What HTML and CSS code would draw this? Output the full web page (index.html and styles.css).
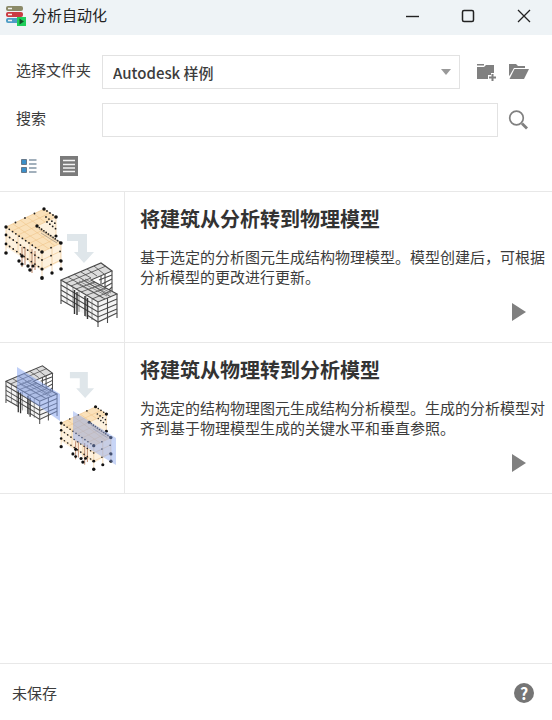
FILE: index.html
```
<!DOCTYPE html>
<html lang="zh-CN">
<head>
  <meta charset="UTF-8">
  <meta name="viewport" content="width=device-width, initial-scale=1.0">
  <title>分析自动化</title>
  <link rel="stylesheet" href="styles.css">
</head>
<body>

<!-- Shared drawings for the thumbnails -->
<svg class="defs" width="0" height="0" aria-hidden="true">
  <defs>
    <!-- Steel frame of the physical building -->
    <symbol id="physical" viewBox="0 0 60 68" overflow="visible">
      <path d="M2 20L42 3L53 11L32 20L58 34L39 42Z" fill="#dcdcdc"/>
      <path d="M2 20L39 42L58 34V53L39 62L2 40Z" fill="#f4f4f4"/>
      <g fill="none" stroke="#4a4a4a" stroke-width="1.100">
        <path d="M2 20L42 3L53 11L32 20L58 34L39 42Z"/>
        <path d="M9 17L46 39M15 14L52 37M22 12L32 18M28 9L38 16M35 6L45 14" stroke-width=".8"/>
        <path d="M7 23L47 6M12 26L32 18M17 29L36 22M22 32L41 25M28 35L47 28M33 39L52 31" stroke-width=".8"/>
        <path d="M17 23L44 38M20 21L48 36M23 20L50 34M26 19L52 33" stroke-width=".6"/>
        <path d="M2 25L39 47L58 39M40 20L53 15"/>
        <path d="M2 30L39 52L58 44M43 24L53 19M2 35L39 57L58 49M46 27L53 23M50 30L53 27M2 40L16 48M28 55L39 62L58 53"/>
        <path d="M2 20V44M39 42V67M58 34V58M48.500 38V63M53 11V31M46 14V27M42 16V25"/>
        <path d="M8 24V43M14 27V47M20 31V52M27 35V57M33 39V60" stroke-width=".6"/>
      </g>
      <path d="M15.500 30V54M18 32V55M26 36V56M28.500 38V59" fill="none" stroke="#333" stroke-width="1.400"/>
    </symbol>

    <!-- Node model of the analytical building -->
    <symbol id="analytical" viewBox="0 0 60 74" overflow="visible">
      <path d="M2 20L40 2L52 10V32L57 36V54L38 64L2 40Z" fill="#fdf1de"/>
      <path d="M2 20L40 2L52 10L33 19L57 36L38 45Z" fill="#fae1ba"/>
      <g fill="none" stroke="#efc48a" stroke-width=".6">
        <path d="M2 20L40 2L52 10L33 19L57 36L38 45ZM9 17L45 42M16 13L51 39M23 10L34 18M30 7L41 15"/>
        <path d="M8 24L46 6M14 28L33 19M20 32L39 23M26 36L45 27M32 41L51 32"/>
        <path d="M2 28L38 53L57 44M2 37L38 62L57 53M2 20V46M38 45V71M57 36V62M14 28V46M26 36V59M48 40V66M52 10V29"/>
      </g>
      <path d="M18 40V60M21 40V58M28 42V66M31 44V63" fill="none" stroke="#c08d70" stroke-width="1.100"/>
      <g fill="none" stroke="#1d1d1d" stroke-width="1.800" stroke-linecap="round">
        <path d="M2 20L38 45" stroke-dasharray="0 4"/>
        <path d="M33 19L57 36" stroke-dasharray="0 2.800"/>
        <path d="M2 28L38 53M2 37L38 62" stroke-dasharray="0 4.400"/>
        <path d="M40 2L52 10M42 10L52 17M43 15L52 22" stroke-dasharray="0 3.600"/>
        <path d="M38 45L57 36M38 53L57 44M38 62L57 53" stroke-dasharray="0 10"/>
        <path d="M2 20L40 2" stroke-dasharray="0 10.500"/>
      </g>
      <path d="M35 22L55 35M37 26L53 36" stroke="#8d8378" stroke-width=".6"/>
      <g fill="#111">
        <circle cx="2" cy="20" r="1.700"/><circle cx="40" cy="2" r="1.700"/><circle cx="52" cy="10" r="1.800"/>
        <circle cx="33" cy="19" r="1.700"/><circle cx="57" cy="36" r="1.700"/><circle cx="38" cy="45" r="1.800"/>
        <circle cx="2" cy="28" r="1.400"/><circle cx="2" cy="37" r="1.400"/><circle cx="2" cy="46" r="1.800"/>
        <circle cx="38" cy="62" r="1.600"/><circle cx="38" cy="71" r="1.900"/><circle cx="48" cy="66" r="1.700"/>
        <circle cx="57" cy="54" r="1.700"/><circle cx="57" cy="62" r="1.800"/><circle cx="52" cy="29" r="1.600"/>
        <circle cx="18" cy="49" r="1.700"/><circle cx="15" cy="54" r="1.700"/><circle cx="18" cy="57" r="1.600"/>
        <circle cx="24" cy="59" r="1.700"/><circle cx="26" cy="63" r="1.800"/><circle cx="29" cy="59" r="1.600"/>
      </g>
    </symbol>

    <symbol id="turn" viewBox="0 0 27 29">
      <path d="M0 0H20V18H27L17 29L7 18H11V7H0Z" fill="#dfe6ea"/>
    </symbol>
  </defs>
</svg>

<!-- Title bar -->
<header class="titlebar">
  <svg class="app-icon" width="20" height="20" viewBox="0 0 20 20" aria-hidden="true">
    <rect x="0" y="0" width="17" height="5" rx="2" fill="#8b8a68"/>
    <rect x="0" y="6" width="17" height="5" rx="2" fill="#cb3b43"/>
    <rect x="0" y="12" width="15" height="5" rx="2" fill="#4e9dc6"/>
    <path d="M2 2.500H6M2 8.500H6M2 14.500H6" stroke="#f1f1ee" stroke-width="1.600"/>
    <rect x="11" y="11" width="9" height="9" fill="#1fce5b"/>
    <path d="M13.500 12.500V18.500L18 15.500Z" fill="#14502b"/>
  </svg>
  <h1>分析自动化</h1>
  <div class="window-buttons">
    <button type="button" aria-label="最小化">
      <svg width="14" height="14" viewBox="0 0 14 14"><path d="M1 7.500H14" stroke="#222" stroke-width="1.400"/></svg>
    </button>
    <button type="button" aria-label="最大化">
      <svg width="14" height="14" viewBox="0 0 14 14"><rect x="1.500" y="1.500" width="11" height="11" rx="1.500" fill="none" stroke="#222" stroke-width="1.500"/></svg>
    </button>
    <button type="button" aria-label="关闭">
      <svg width="14" height="14" viewBox="0 0 14 14"><path d="M1 1L13 13M13 1L1 13" stroke="#222" stroke-width="1.300"/></svg>
    </button>
  </div>
</header>

<!-- Folder and search -->
<form class="filters">
  <div class="row folder-row">
    <label for="folder">选择文件夹</label>
    <div class="select-wrap">
      <select id="folder">
        <option>Autodesk 样例</option>
      </select>
      <svg class="caret" width="10" height="6" viewBox="0 0 10 6" aria-hidden="true"><path d="M0 0H10L5 6Z" fill="#999"/></svg>
    </div>
    <div class="row-buttons">
      <button type="button" aria-label="添加文件夹">
        <svg width="22" height="20" viewBox="0 0 22 20">
          <path d="M2 2H9V3.500H2ZM2 5H9L11 3H19V11H16V13H13V17H2Z" fill="#808080"/>
          <path d="M17.500 12V19M14 15.500H21" stroke="#808080" stroke-width="2"/>
        </svg>
      </button>
      <button type="button" aria-label="打开文件夹">
        <svg width="22" height="20" viewBox="0 0 22 20">
          <path d="M2 2H9L11 4H18V6H7L3 13L2 14Z" fill="#808080"/>
          <path d="M7.500 7H22L17 17H2.500Z" fill="#808080"/>
        </svg>
      </button>
    </div>
  </div>
  <div class="row search-row">
    <label for="search">搜索</label>
    <input type="text" id="search">
    <div class="row-buttons">
      <button type="button" aria-label="搜索">
        <svg width="22" height="22" viewBox="0 0 22 22">
          <circle cx="9.500" cy="9" r="6.800" fill="none" stroke="#808080" stroke-width="1.700"/>
          <path d="M15 14.500L20 19.500" stroke="#808080" stroke-width="2.800"/>
        </svg>
      </button>
    </div>
  </div>
  <div class="views">
    <button type="button" aria-label="缩略图视图">
      <svg width="16" height="16" viewBox="0 0 16 16">
        <path d="M.5 1.500H5.500V6.500H.5ZM.5 9.500H5.500V14.500H.5Z" fill="#3a8fc9" stroke="#66788a" stroke-width="1"/>
        <path d="M8 2H15.500M8 6H15.500M8 10H15.500M8 14H15.500" stroke="#8496a6" stroke-width="1.600"/>
      </svg>
    </button>
    <button type="button" aria-label="列表视图">
      <svg width="20" height="20" viewBox="0 0 20 20">
        <rect x="1" y="0" width="18" height="20" fill="#7b7b7b"/>
        <path d="M4 4.500H16M4 8.500H16M4 12H16M4 15.500H16" stroke="#f4f4f4" stroke-width="1.500"/>
      </svg>
    </button>
  </div>
</form>

<!-- Scripts -->
<main class="scripts">
  <article class="script">
    <svg class="thumb" width="124" height="150" viewBox="0 0 124 150" aria-hidden="true">
      <use href="#analytical" x="4" y="15" width="60" height="74"/>
      <use href="#turn" x="67" y="42" width="27" height="29"/>
      <use href="#physical" x="59" y="68" width="60" height="68"/>
    </svg>
    <div class="info">
      <h2>将建筑从分析转到物理模型</h2>
      <p>基于选定的分析图元生成结构物理模型。模型创建后，可根据分析模型的更改进行更新。</p>
      <button type="button" class="run" aria-label="运行">
        <svg width="14" height="18" viewBox="0 0 14 18"><path d="M0 0V18L14 9Z" fill="#808080"/></svg>
      </button>
    </div>
  </article>

  <article class="script">
    <svg class="thumb" width="124" height="150" viewBox="0 0 124 150" aria-hidden="true">
      <use href="#physical" x="4" y="20" width="55" height="62"/>
      <path d="M17 24L60 51V78L17 48Z" fill="#7f9ff0" opacity=".5"/>
      <use href="#turn" x="69" y="29" width="26" height="26"/>
      <use href="#analytical" x="59" y="62" width="55" height="67"/>
      <path d="M73 68L116 95V122L73 96Z" fill="#86a2ea" opacity=".45"/>
    </svg>
    <div class="info">
      <h2>将建筑从物理转到分析模型</h2>
      <p>为选定的结构物理图元生成结构分析模型。生成的分析模型对齐到基于物理模型生成的关键水平和垂直参照。</p>
      <button type="button" class="run" aria-label="运行">
        <svg width="14" height="18" viewBox="0 0 14 18"><path d="M0 0V18L14 9Z" fill="#808080"/></svg>
      </button>
    </div>
  </article>
</main>

<!-- Status bar -->
<footer class="statusbar">
  <span>未保存</span>
  <button type="button" class="help" aria-label="帮助">?</button>
</footer>

</body>
</html>
```
FILE: styles.css
```
* { box-sizing: border-box; }
body {
  margin: 0;
  min-height: 100vh;
  display: flex;
  flex-direction: column;
  background: #fff;
  color: #3c3c3c;
  font-family: "Noto Sans CJK SC", sans-serif;
  font-size: 15px;
  line-height: 20px;
}
h1, h2, p { margin: 0; }
button { padding: 0; border: none; background: none; cursor: pointer; }
button svg { display: block; margin: auto; }
.defs { position: absolute; }

/* Title bar */
.titlebar {
  display: flex;
  align-items: center;
  height: 35px;
  padding-left: 6px;
  background: #eef3f6;
}
.titlebar h1 { margin-left: 6px; padding-bottom: 6px; font-size: 15px; line-height: 20px; font-weight: normal; color: #222; }
.app-icon { margin-bottom: 4px; }
.window-buttons { display: flex; margin-left: auto; }
.window-buttons button { width: 56px; height: 35px; padding-bottom: 4px; }

/* Folder and search */
.filters { padding: 20px 18px 0 16px; }
.row { display: flex; align-items: center; height: 33px; margin-bottom: 15px; }
.row label { width: 86px; padding-bottom: 4px; }
.folder-row { gap: 10px; }
.folder-row label { margin-right: -10px; }
.search-row { gap: 4px; }
.search-row label { margin-right: -4px; }
.select-wrap { position: relative; flex: 1; }
.caret { position: absolute; top: 14px; right: 9px; pointer-events: none; }
select, input {
  display: block;
  width: 100%;
  height: 34px;
  padding: 2px 10px 0;
  border: 1px solid #e2e2e2;
  border-radius: 0;
  background: #fff;
  color: #3c3c3c;
  font: inherit;
}
select { appearance: none; font-weight: 500; }
input { flex: 1; }
.row-buttons { display: flex; }
.row-buttons button { width: 32px; height: 32px; }
.views { display: flex; gap: 20px; padding: 5px 3px 15px; }
.views button { width: 20px; height: 20px; }

/* Scripts */
.scripts { flex: 1; border-top: 1px solid #e8e8e8; }
.script { display: flex; border-bottom: 1px solid #e8e8e8; }
.thumb { flex: none; }
.info {
  flex: 1;
  display: flex;
  flex-direction: column;
  padding: 13px 7px 21px 15px;
  border-left: 1px solid #e8e8e8;
}
.info h2 { margin-bottom: 14px; font-size: 20px; line-height: 28px; color: #333; }
.info p { line-height: 20px; }
.run { width: 14px; height: 18px; margin: auto 19px 0 auto; }

/* Status bar */
.statusbar {
  display: flex;
  align-items: center;
  justify-content: space-between;
  height: 57px;
  padding: 2px 18px 0 12px;
  border-top: 1px solid #e8e8e8;
}
.help {
  width: 20px;
  height: 20px;
  border-radius: 50%;
  background: #757575;
  color: #fff;
  font: bold 16px/20px "Noto Sans CJK SC", sans-serif;
}
```
